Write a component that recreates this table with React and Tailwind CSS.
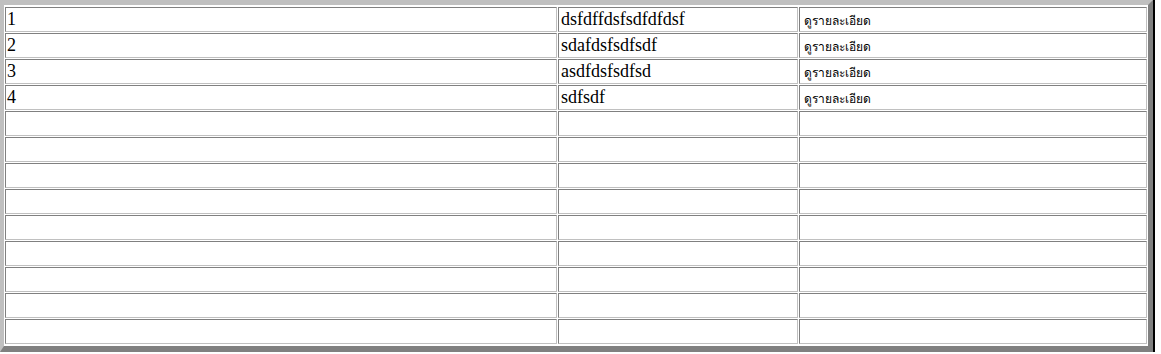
import React from 'react';

const rows = [
  ['1', 'dsfdffdsfsdfdfdsf', 'ดูรายละเอียด'],
  ['2', 'sdafdsfsdfsdf', 'ดูรายละเอียด'],
  ['3', 'asdfdsfsdfsd', 'ดูรายละเอียด'],
  ['4', 'sdfsdf', 'ดูรายละเอียด'],
  ...Array.from({ length: 9 }, () => ['', '', '']),
];

const cell = 'h-[25px] border border-t-[#808080] border-l-[#808080] border-b-[#c0c0c0] border-r-[#c0c0c0] bg-white overflow-hidden whitespace-nowrap';

export default function App() {
  return (
    <div className="bg-white w-[1161px] h-[354px]">
      <div className="w-[1155px] border-r-2 border-black">
        <div className="border-t-[5px] border-l-[4px] border-r-[5px] border-b-[6px] border-t-[#c0c0c0] border-l-[#c0c0c0] border-r-[#808080] border-b-[#808080] pl-px pt-[2px] pr-px pb-[2px]">
          <div className="grid grid-cols-[552px_240px_348px] gap-x-px gap-y-px">
            {rows.map((r, i) => (
              <React.Fragment key={i}>
                <div className={`${cell} pl-px text-[18px] leading-[22px] text-black font-['Liberation_Serif',serif]`}>{r[0]}</div>
                <div className={`${cell} pl-[2px] text-[18px] leading-[22px] text-black font-['Liberation_Serif',serif]`}>{r[1]}</div>
                <div className={`${cell} pl-[4px] pt-[3px] text-[12px] leading-[20px] text-black font-['Tahoma','DejaVu_Sans',sans-serif]`}>{r[2]}</div>
              </React.Fragment>
            ))}
          </div>
        </div>
      </div>
    </div>
  );
}
